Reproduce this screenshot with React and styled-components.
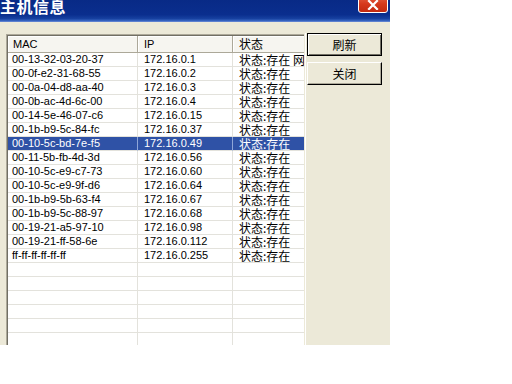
import React from "react";
import styled, { createGlobalStyle } from "styled-components";

const Global = createGlobalStyle`
  html, body { margin: 0; padding: 0; background: #ffffff; }
  body { font-family: "Liberation Sans", "Noto Sans CJK SC", sans-serif; }
`;

const Window = styled.div`
  width: 390px;
  height: 345px;
  display: flex;
  flex-direction: column;
  background: #ece9d8;
  overflow: hidden;
`;

const TitleBar = styled.div`
  height: 21px;
  flex: none;
  display: flex;
  align-items: flex-start;
  justify-content: space-between;
  background: linear-gradient(to bottom, #082a86 0%, #0a2e8e 70%, #16409f 88%, #3a68c4 100%);
  border-bottom: 1px solid #5b7fcf;
`;

const Title = styled.div`
  color: #ffffff;
  font-family: "Noto Sans CJK SC", sans-serif;
  font-weight: 700;
  font-size: 16px;
  line-height: 16px;
  margin-top: -2px;
  letter-spacing: 0.5px;
`;

const CloseBtn = styled.div`
  width: 30px;
  height: 20px;
  margin-top: -7px;
  margin-right: 2px;
  border: 1px solid #ffffff;
  border-radius: 3px;
  background: linear-gradient(to bottom, #e66b4f 0%, #d6391c 55%, #c22a10 100%);
  display: flex;
  align-items: flex-end;
  justify-content: center;
  padding-bottom: 2px;
  box-sizing: border-box;
`;

const Body = styled.div`
  flex: 1;
  display: flex;
  padding: 12px 0 0 6px;
  min-height: 0;
`;

const List = styled.div`
  width: 298px;
  flex: none;
  box-sizing: border-box;
  border-top: 1px solid #aca899;
  border-left: 1px solid #aca899;
  box-shadow: inset 1px 1px 0 #716f64;
  background: #ffffff;
  overflow: hidden;
  padding: 1px 0 0 1px;
  display: flex;
  flex-direction: column;
`;

const Grid = styled.div`
  display: grid;
  grid-template-columns: 130px 95px 110px;
  width: 335px;
`;

const HeadCell = styled.div`
  height: 17px;
  box-sizing: border-box;
  background: #f6f5f0;
  border-right: 1px solid #aca899;
  border-bottom: 1px solid #aca899;
  box-shadow: inset 1px 1px 0 #ffffff;
  padding-left: ${(p) => (p.$first ? "5px" : "6px")};
  font-size: ${(p) => (p.$cjk ? "12px" : "11px")};
  font-family: ${(p) =>
    p.$cjk ? '"Noto Sans CJK SC", sans-serif' : '"Liberation Sans", sans-serif'};
  line-height: 16px;
  color: #000;
  white-space: nowrap;
  overflow: hidden;
`;

const Cell = styled.div`
  height: 14px;
  box-sizing: border-box;
  border-right: 1px solid ${(p) => (p.$sel ? "#8fa6d8" : "#e3e2dc")};
  border-bottom: 1px solid #e3e2dc;
  background: ${(p) => (p.$sel ? "#2f52a6" : "#ffffff")};
  color: ${(p) => (p.$sel ? "#ffffff" : "#000000")};
  padding-left: ${(p) => (p.$first ? "4px" : "6px")};
  font-size: ${(p) => (p.$cjk ? "12px" : "11px")};
  font-family: ${(p) =>
    p.$cjk ? '"Noto Sans CJK SC", sans-serif' : '"Liberation Sans", sans-serif'};
  line-height: 13px;
  white-space: nowrap;
  overflow: hidden;
`;

const Side = styled.div`
  flex: 1;
  display: flex;
  flex-direction: column;
  gap: 6px;
  margin: -1px 0 0 1px;
  padding: 0 0 0 1px;
  border-left: 1px solid #ffffff;
`;

const Button = styled.div`
  width: 75px;
  height: 23px;
  box-sizing: border-box;
  display: flex;
  align-items: center;
  justify-content: center;
  background: #ece9d8;
  font-family: "Noto Sans CJK SC", sans-serif;
  font-size: 12px;
  color: #000;
  border: 1px solid ${(p) => (p.$default ? "#000000" : "#ffffff")};
  border-right-color: #000000;
  border-bottom-color: #000000;
  box-shadow: ${(p) =>
    p.$default
      ? "inset 1px 1px 0 #ffffff, inset -1px -1px 0 #716f64"
      : "inset -1px -1px 0 #aca899"};
`;

const rows = [
  ["00-13-32-03-20-37", "172.16.0.1", "状态:存在 网关"],
  ["00-0f-e2-31-68-55", "172.16.0.2", "状态:存在"],
  ["00-0a-04-d8-aa-40", "172.16.0.3", "状态:存在"],
  ["00-0b-ac-4d-6c-00", "172.16.0.4", "状态:存在"],
  ["00-14-5e-46-07-c6", "172.16.0.15", "状态:存在"],
  ["00-1b-b9-5c-84-fc", "172.16.0.37", "状态:存在"],
  ["00-10-5c-bd-7e-f5", "172.16.0.49", "状态:存在"],
  ["00-11-5b-fb-4d-3d", "172.16.0.56", "状态:存在"],
  ["00-10-5c-e9-c7-73", "172.16.0.60", "状态:存在"],
  ["00-10-5c-e9-9f-d6", "172.16.0.64", "状态:存在"],
  ["00-1b-b9-5b-63-f4", "172.16.0.67", "状态:存在"],
  ["00-1b-b9-5c-88-97", "172.16.0.68", "状态:存在"],
  ["00-19-21-a5-97-10", "172.16.0.98", "状态:存在"],
  ["00-19-21-ff-58-6e", "172.16.0.112", "状态:存在"],
  ["ff-ff-ff-ff-ff-ff", "172.16.0.255", "状态:存在"],
  ["", "", ""],
  ["", "", ""],
  ["", "", ""],
  ["", "", ""],
  ["", "", ""],
  ["", "", ""],
];

export default function App() {
  return (
    <>
      <Global />
      <Window>
        <TitleBar>
          <Title>主机信息</Title>
          <CloseBtn>
            <svg width="12" height="10" viewBox="0 0 12 10">
              <path d="M2 1 L10 9 M10 1 L2 9" stroke="#ffffff" strokeWidth="2.2" strokeLinecap="square" />
            </svg>
          </CloseBtn>
        </TitleBar>
        <Body>
          <List>
            <Grid>
              <HeadCell $first>MAC</HeadCell>
              <HeadCell>IP</HeadCell>
              <HeadCell $cjk>状态</HeadCell>
              {rows.map((r, i) => {
                const sel = i === 6;
                return (
                  <React.Fragment key={i}>
                    <Cell $first $sel={sel}>{r[0]}</Cell>
                    <Cell $sel={sel}>{r[1]}</Cell>
                    <Cell $cjk $sel={sel}>{r[2]}</Cell>
                  </React.Fragment>
                );
              })}
            </Grid>
          </List>
          <Side>
            <Button $default>刷新</Button>
            <Button>关闭</Button>
          </Side>
        </Body>
      </Window>
    </>
  );
}
